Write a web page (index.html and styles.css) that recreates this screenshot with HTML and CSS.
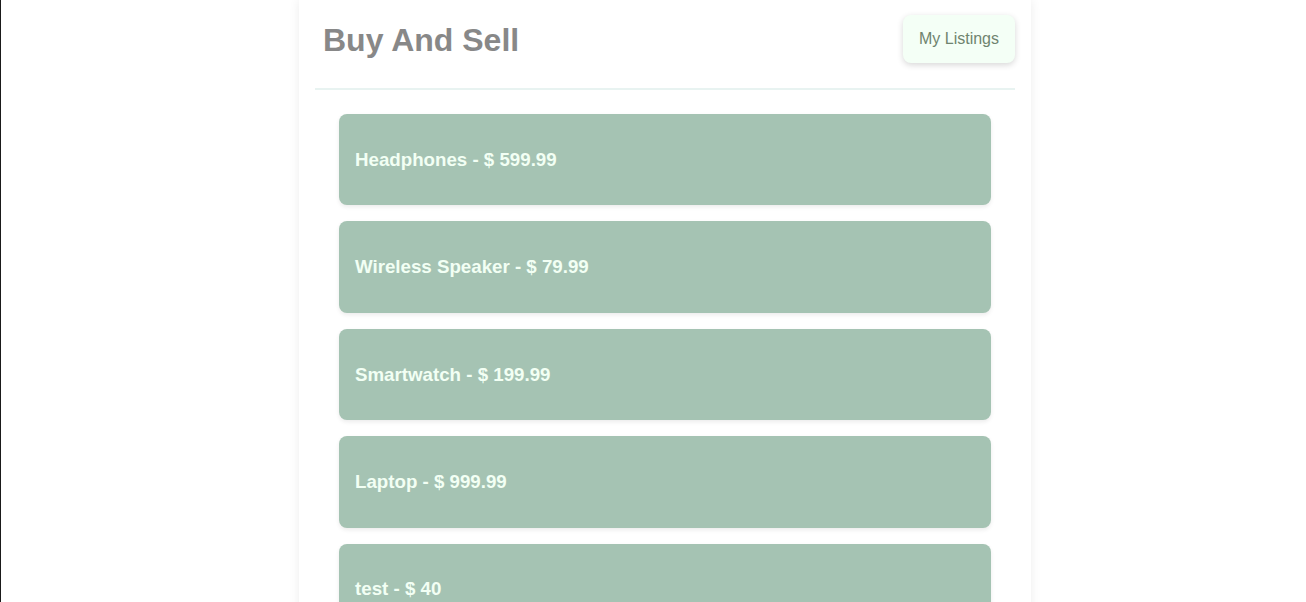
FILE: index.html
```html
<!DOCTYPE html>
<html lang="en">
<head>
<meta charset="utf-8">
<title>Buy And Sell</title>
<link rel="stylesheet" href="styles.css">
</head>
<body>
  <div class="page">
    <main class="container">
      <header class="header">
        <h1 class="title">Buy And Sell</h1>
        <button class="listings-btn">My Listings</button>
      </header>
      <section class="list">
        <div class="card"><h3 class="card-title">Headphones - $ 599.99</h3></div>
        <div class="card"><h3 class="card-title">Wireless Speaker - $ 79.99</h3></div>
        <div class="card"><h3 class="card-title">Smartwatch - $ 199.99</h3></div>
        <div class="card"><h3 class="card-title">Laptop - $ 999.99</h3></div>
        <div class="card"><h3 class="card-title">test - $ 40</h3></div>
      </section>
    </main>
  </div>
</body>
</html>
```

FILE: styles.css
```css
html, body {
  margin: 0;
  padding: 0;
  background: #ffffff;
  font-family: "Liberation Sans", Arial, sans-serif;
}

.page {
  border-left: 1px solid #1a1a1a;
  padding-left: 23px;
  min-height: 100vh;
  box-sizing: border-box;
}

.container {
  width: 732px;
  box-sizing: border-box;
  margin: 0 auto;
  padding: 0 16px 16px;
  background: #ffffff;
  box-shadow: 0 0 10px rgba(0, 0, 0, 0.08);
  min-height: 100vh;
}

.header {
  display: flex;
  align-items: center;
  justify-content: space-between;
  padding: 15px 0 25px 8px;
  border-bottom: 2px solid #e8f3f1;
}

.title {
  margin: 2px 0 0;
  font-size: 32px;
  font-weight: bold;
  color: #888888;
}

.listings-btn {
  font-family: "Liberation Sans", Arial, sans-serif;
  font-size: 16px;
  color: #6f846f;
  background: #f4fff6;
  border: none;
  border-radius: 8px;
  padding: 15px 16px;
  line-height: 18px;
  box-shadow: 0 2px 6px rgba(0, 0, 0, 0.16);
  cursor: pointer;
}

.list {
  display: flex;
  flex-direction: column;
  gap: 16px;
  padding: 24px;
}

.card {
  background: #a5c3b3;
  border-radius: 8px;
  padding: 16px;
  box-shadow: 0 2px 4px rgba(0, 0, 0, 0.08);
}

.card-title {
  margin: 18.72px 0;
  font-size: 18.72px;
  font-weight: bold;
  color: #f2fff4;
}
```
